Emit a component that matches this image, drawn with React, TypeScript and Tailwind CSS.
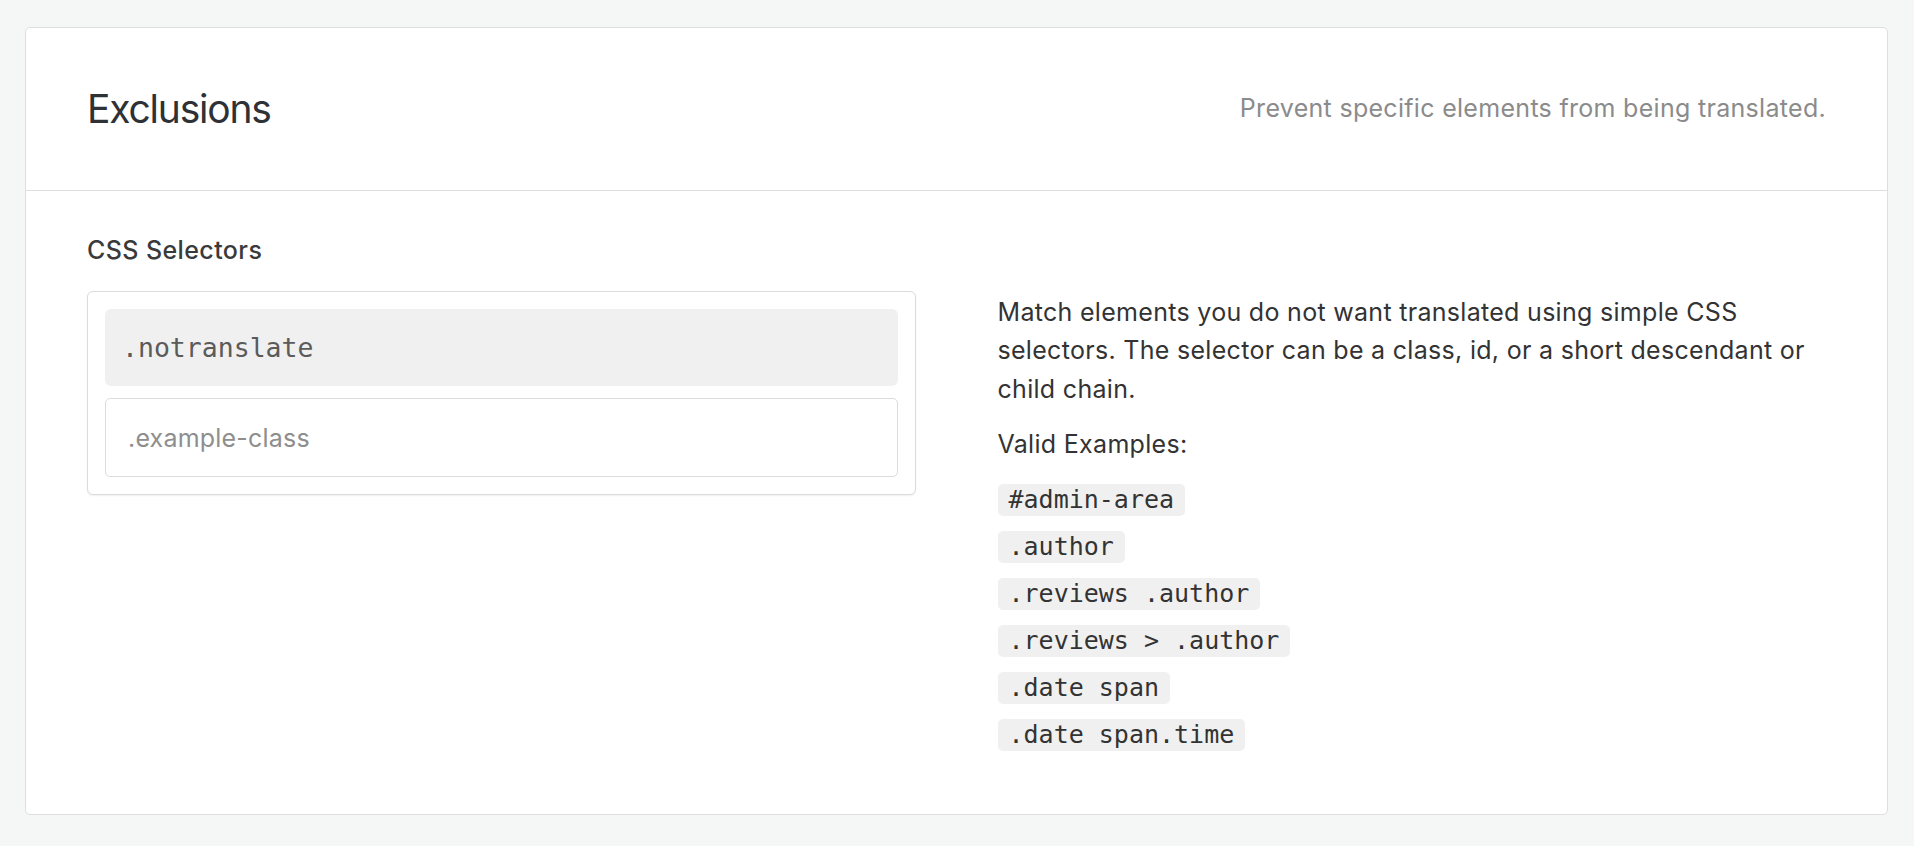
const examples = [
  '#admin-area',
  '.author',
  '.reviews .author',
  '.reviews > .author',
  '.date span',
  '.date span.time',
];

export default function App() {
  return (
    <div className="min-h-screen bg-[#f5f6f6] pt-[27px] pb-[31px] pl-[25px] pr-[26px] font-['Inter',sans-serif]">
      <div className="rounded-[5px] border border-[#dedede] bg-white">
        <div className="flex h-[163px] items-center justify-between border-b border-[#dedede] px-[61px]">
          <h1 className="text-[39px] tracking-[-1.2px] text-[#2e3135]">Exclusions</h1>
          <p className="text-[25px] tracking-[0.3px] text-[#8b8b8b]">Prevent specific elements from being translated.</p>
        </div>

        <div className="px-[61px] pt-[40px] pb-[63px]">
          <h2 className="mb-[22px] text-[25px] leading-[38px] tracking-[0.4px] font-medium text-[#3a3a3a]">CSS Selectors</h2>

          <div className="grid grid-cols-2 gap-[82px]">
            <div className="flex flex-col gap-[12px] self-start rounded-[6px] border border-[#dcdcdc] bg-white p-[17px] shadow-[0_1px_2px_rgba(0,0,0,0.07)]">
              <div className="flex h-[77px] items-center rounded-[6px] bg-[#f0f0f0] px-[17px] font-['DejaVu_Sans_Mono',monospace] text-[26.5px] text-[#5b5b5b]">
                .notranslate
              </div>
              <input
                placeholder=".example-class"
                className="h-[79px] rounded-[5px] border border-[#dcdcdc] px-[22px] text-[25px] tracking-[0.2px] text-[#333] outline-none placeholder:text-[#8e8e8e]"
              />
            </div>

            <div className="mt-[2px] text-[25px] leading-[38.4px] tracking-[0.3px] text-[#333]">
              <p className="mb-[17px]">
                Match elements you do not want translated using simple CSS selectors. The selector can be a class, id, or a short descendant or child chain.
              </p>
              <p className="mb-[20px]">Valid Examples:</p>
              <div className="flex flex-col items-start gap-[14.5px] tracking-normal">
                {examples.map((ex) => (
                  <code
                    key={ex}
                    className="rounded-[5px] bg-[#f0f0f0] px-[11px] font-['DejaVu_Sans_Mono',monospace] text-[25px] leading-[32.5px] whitespace-pre text-[#333]"
                  >
                    {ex}
                  </code>
                ))}
              </div>
            </div>
          </div>
        </div>
      </div>
    </div>
  );
}
